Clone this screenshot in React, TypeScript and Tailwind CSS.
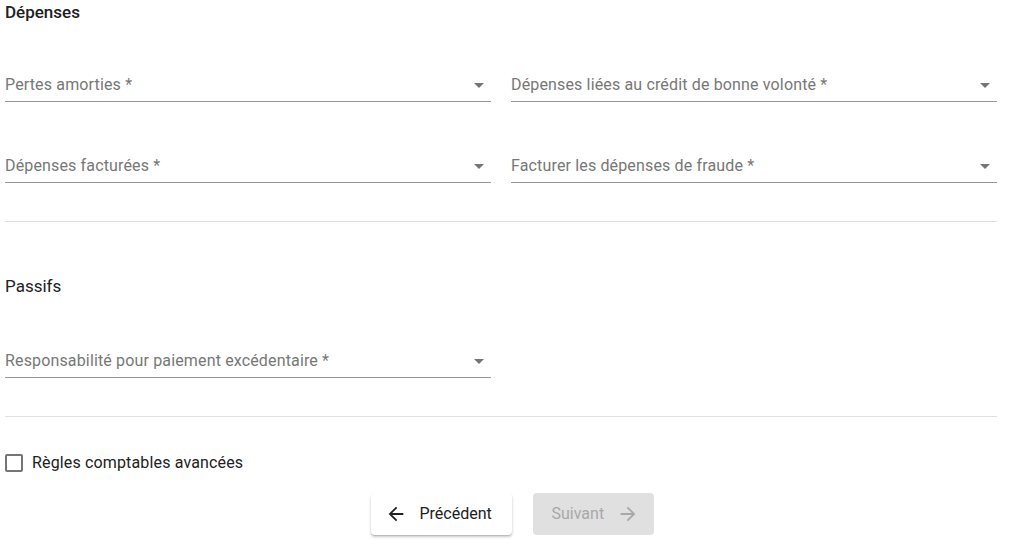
function SelectField({ label }: { label: string }) {
  return (
    <div className="flex items-start justify-between border-b border-[#949494] pb-1">
      <span className="text-base leading-6 tracking-[0.15px] text-[#777]">{label}</span>
      <svg viewBox="0 0 24 24" className="h-6 w-6 fill-[#757575]">
        <path d="M7 10l5 5 5-5z" />
      </svg>
    </div>
  );
}

export default function App() {
  return (
    <div className="font-['Roboto',sans-serif] text-[#212121] bg-white min-h-[546px]">
      <div className="ml-[5px] w-[992px]">
        <h2 className="text-[17px] leading-6 font-medium">Dépenses</h2>
        <div className="mt-[49px] grid grid-cols-2 gap-x-5 gap-y-[52px]">
          <SelectField label="Pertes amorties *" />
          <SelectField label="Dépenses liées au crédit de bonne volonté *" />
          <SelectField label="Dépenses facturées *" />
          <SelectField label="Facturer les dépenses de fraude *" />
        </div>
        <hr className="mt-[38px] border-[#e0e0e0]" />

        <h2 className="mt-[52px] text-[17px] leading-6">Passifs</h2>
        <div className="mt-[51px] grid grid-cols-2 gap-x-5">
          <SelectField label="Responsabilité pour paiement excédentaire *" />
        </div>
        <hr className="mt-[38px] border-[#e0e0e0]" />

        <label className="mt-[34px] flex h-6 items-center">
          <span className="h-[18px] w-[18px] rounded-[2px] border-2 border-[#757575]" />
          <span className="ml-[9px] text-base leading-6 tracking-[0.15px]">Règles comptables avancées</span>
        </label>
      </div>

      <div className="mt-[18px] flex justify-center gap-[21px]">
        <button className="flex h-[42px] w-[141px] items-center gap-[13px] rounded bg-white pl-[14px] text-base text-[#212121] shadow-[0_2px_3px_rgba(0,0,0,0.2),0_1px_1px_rgba(0,0,0,0.12)]">
          <svg viewBox="0 0 24 24" className="h-[22px] w-[22px] fill-current">
            <path d="M20 11H7.83l5.59-5.59L12 4l-8 8 8 8 1.41-1.41L7.83 13H20v-2z" />
          </svg>
          Précédent
        </button>
        <button
          disabled
          className="flex h-[42px] w-[121px] items-center gap-[13px] rounded bg-[#e0e0e0] pl-[19px] text-base text-[#a8a8a8]"
        >
          Suivant
          <svg viewBox="0 0 24 24" className="h-[22px] w-[22px] fill-current">
            <path d="M12 4l-1.41 1.41L16.17 11H4v2h12.17l-5.58 5.59L12 20l8-8z" />
          </svg>
        </button>
      </div>
    </div>
  );
}
